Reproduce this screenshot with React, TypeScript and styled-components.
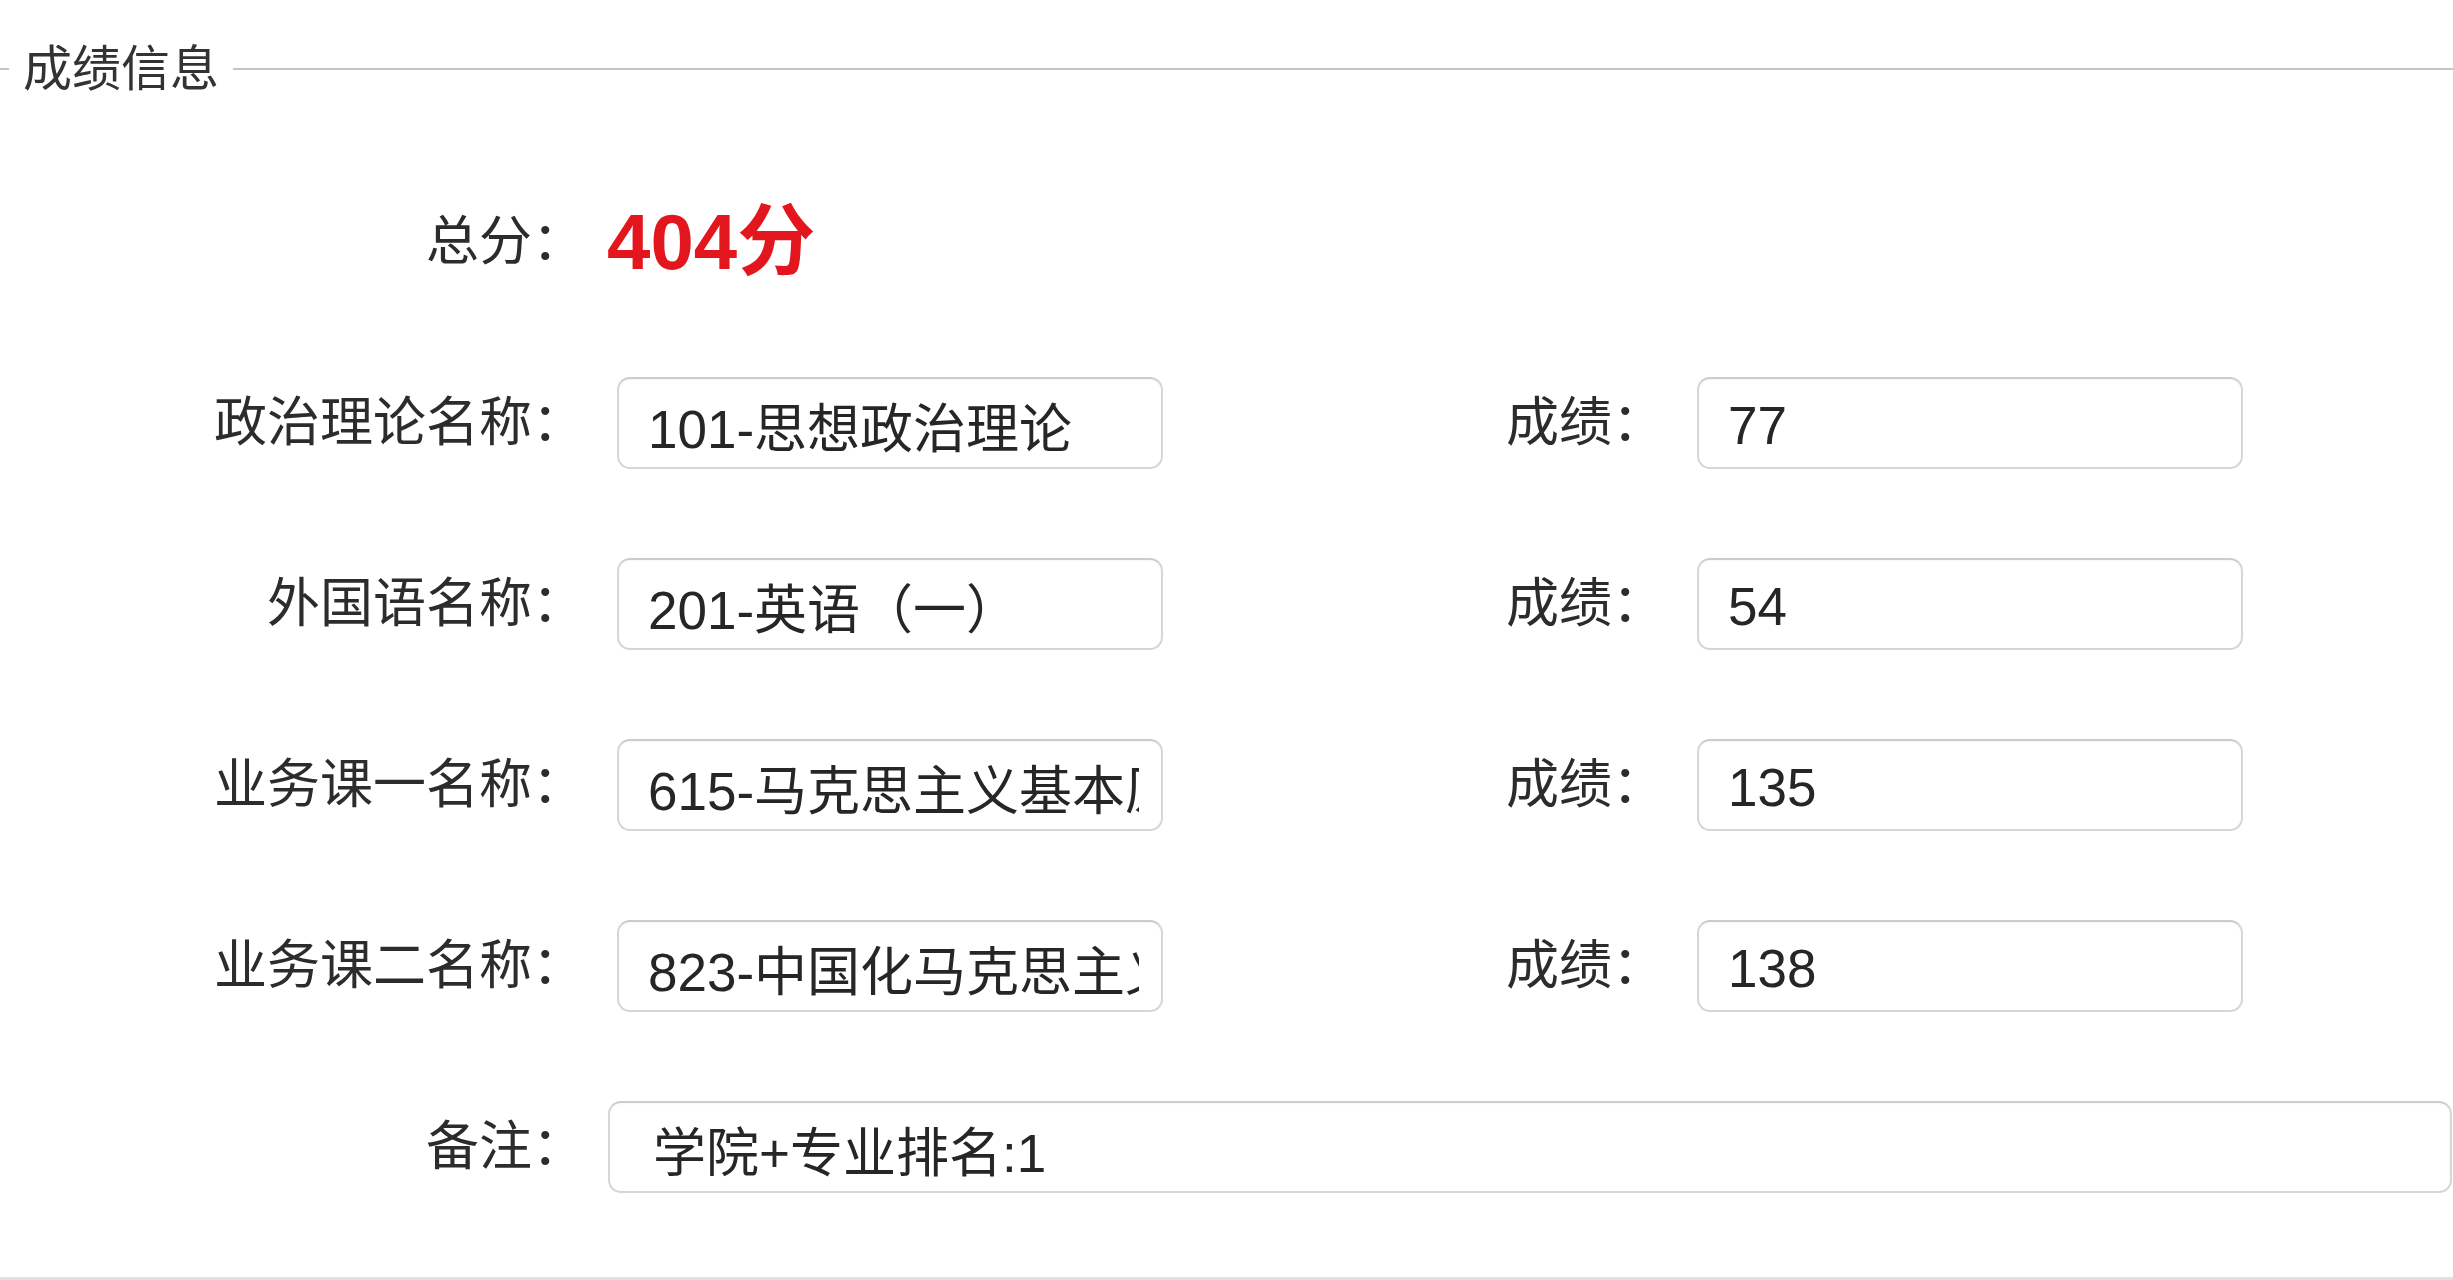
import React from "react";
import styled, { createGlobalStyle } from "styled-components";

const GlobalStyle = createGlobalStyle`
  html, body {
    margin: 0;
    padding: 0;
    background: #ffffff;
    overflow: hidden;
  }

  body {
    font-family: "Liberation Sans", Arial, "Noto Sans CJK SC", sans-serif;
    color: #333333;
  }
`;

const Page = styled.div`
  width: 2453px;
  height: 1280px;
  box-sizing: border-box;
  padding-top: 40px;
  border-bottom: 3px solid #e2e2e2;
`;

const Legend = styled.div`
  display: flex;
  align-items: center;
  height: 58px;
`;

const LegendLine = styled.span<{ $grow?: boolean }>`
  height: 2px;
  background: #c4c4c4;
  width: 9px;
  flex: ${(p) => (p.$grow ? "1" : "none")};
`;

const LegendText = styled.span`
  padding: 0 14px;
  font-size: 49px;
  line-height: 58px;
  color: #333333;
`;

const Form = styled.div`
  display: flex;
  flex-direction: column;
  gap: 89px;
  margin-top: 98px;
`;

const Row = styled.div`
  display: flex;
  align-items: center;
  height: 92px;
`;

const Label = styled.label<{ $width: number }>`
  width: ${(p) => p.$width}px;
  flex-shrink: 0;
  text-align: right;
  font-size: 53px;
  line-height: 92px;
  color: #2c2c2c;
  white-space: nowrap;
`;

const Field = styled.input<{ $wide?: boolean }>`
  box-sizing: border-box;
  height: 92px;
  width: ${(p) => (p.$wide ? "auto" : "546px")};
  flex: ${(p) => (p.$wide ? "1" : "none")};
  margin-left: ${(p) => (p.$wide ? "23px" : "32px")};
  margin-right: ${(p) => (p.$wide ? "1px" : "0")};
  padding: 4px 22px 0 ${(p) => (p.$wide ? "43px" : "29px")};
  border: 2px solid #d6d6d6;
  border-top-color: #cccccc;
  border-radius: 13px;
  background: #ffffff;
  box-shadow: inset 0 1px 2px rgba(0, 0, 0, 0.04);
  font-family: "Liberation Sans", Arial, "Noto Sans CJK SC", sans-serif;
  font-size: 53px;
  color: #262626;
  outline: none;
`;

const Score = styled.span`
  margin-left: 22px;
  font-size: 78px;
  font-weight: 700;
  color: #e3161d;
  line-height: 92px;
`;

type Subject = {
  label: string;
  name: string;
  score: string;
};

const subjects: Subject[] = [
  { label: "政治理论名称：", name: "101-思想政治理论", score: "77" },
  { label: "外国语名称：", name: "201-英语（一）", score: "54" },
  { label: "业务课一名称：", name: "615-马克思主义基本原理", score: "135" },
  { label: "业务课二名称：", name: "823-中国化马克思主义理论", score: "138" },
];

export default function App() {
  return (
    <>
      <GlobalStyle />
      <Page>
        <Legend>
          <LegendLine />
          <LegendText>成绩信息</LegendText>
          <LegendLine $grow />
        </Legend>

        <Form>
          <Row>
            <Label $width={585}>总分：</Label>
            <Score>404分</Score>
          </Row>

          {subjects.map((s) => (
            <Row key={s.label}>
              <Label $width={585}>{s.label}</Label>
              <Field readOnly value={s.name} />
              <Label $width={502}>成绩：</Label>
              <Field readOnly value={s.score} />
            </Row>
          ))}

          <Row>
            <Label $width={585}>备注：</Label>
            <Field $wide readOnly value="学院+专业排名:1" />
          </Row>
        </Form>
      </Page>
    </>
  );
}
